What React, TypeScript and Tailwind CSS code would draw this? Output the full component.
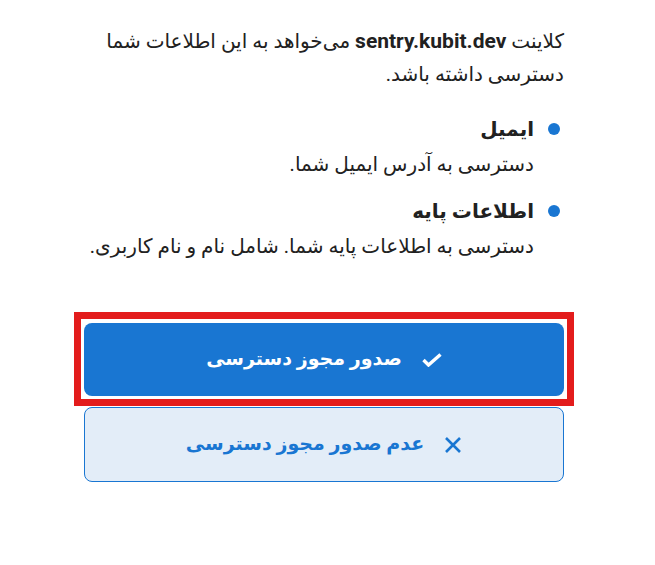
import { ReactNode } from 'react';

const font = { fontFamily: 'Roboto, "DejaVu Sans", sans-serif' };

function CheckIcon() {
  return (
    <svg viewBox="0 0 20 14" className="h-[14px] w-[20px]" fill="none" stroke="currentColor" strokeWidth="3.4" strokeLinejoin="miter">
      <path d="M1.5 7l5 5L18.5 1.5" />
    </svg>
  );
}

function CloseIcon() {
  return (
    <svg viewBox="0 0 18 18" className="h-[18px] w-[18px]" fill="none" stroke="currentColor" strokeWidth="2.6">
      <path d="M2 2l14 14M16 2L2 16" />
    </svg>
  );
}

function Scope({ title, children }: { title: string; children: ReactNode }) {
  return (
    <li className="flex flex-col">
      <div className="flex items-center gap-[14px]">
        <span className="h-[12px] w-[12px] rounded-full bg-[#1976d2] mr-[4px]" />
        <span className="text-[20px] font-bold leading-[36px]">{title}</span>
      </div>
      <div className="pr-[30px] text-[20px] leading-[34px]">{children}</div>
    </li>
  );
}

export default function App() {
  return (
    <div dir="rtl" style={font} className="min-h-screen w-full bg-white text-[#212121] flex justify-center pr-[7px]">
      <div className="w-[480px] pt-[25px]">
        <p className="text-[20px] leading-[33px]">
          کلاینت <b className="text-[21px] font-bold">sentry.kubit.dev</b> می‌خواهد به این اطلاعات شما دسترسی داشته باشد.
        </p>

        <ul className="mt-[20px] flex flex-col gap-[12px]">
          <Scope title="ایمیل">دسترسی به آدرس ایمیل شما.</Scope>
          <Scope title="اطلاعات پایه">دسترسی به اطلاعات پایه شما. شامل نام و نام کاربری.</Scope>
        </ul>

        <div className="mt-[49px] -mx-[10px] border-[7px] border-[#e31c1c] px-[3px] pt-[4px] pb-[3px]">
          <button className="flex h-[73px] w-full items-center justify-center gap-[20px] rounded-[8px] bg-[#1976d2] text-[19px] font-bold text-white">
            <CheckIcon />
            <span>صدور مجوز دسترسی</span>
          </button>
        </div>
        <button className="mt-[1px] flex h-[75px] w-full items-center justify-center gap-[20px] rounded-[8px] border border-[#1976d2] bg-[#e3edf8] text-[19px] font-bold text-[#1976d2]">
          <CloseIcon />
          <span>عدم صدور مجوز دسترسی</span>
        </button>
      </div>
    </div>
  );
}
